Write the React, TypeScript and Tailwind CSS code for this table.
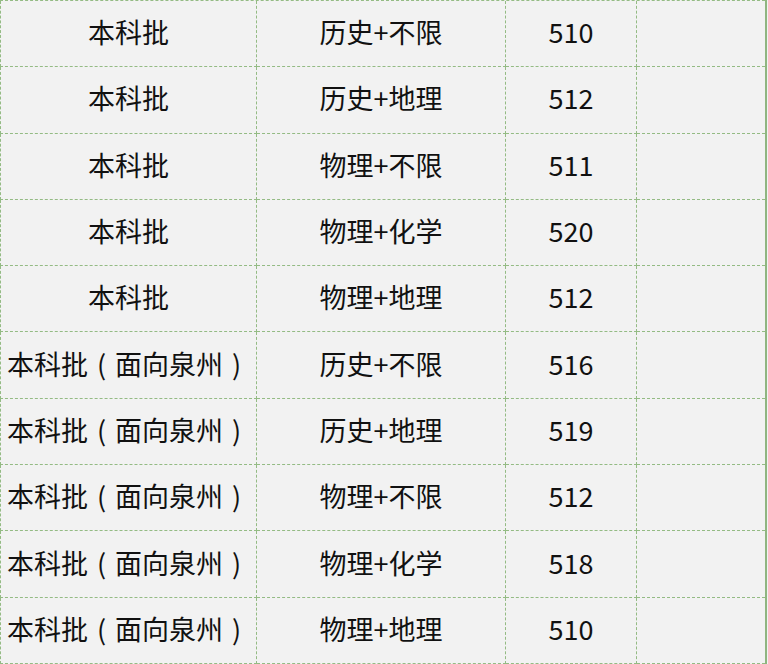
const rows: [string, string, string][] = [
  ["本科批", "历史+不限", "510"],
  ["本科批", "历史+地理", "512"],
  ["本科批", "物理+不限", "511"],
  ["本科批", "物理+化学", "520"],
  ["本科批", "物理+地理", "512"],
  ["本科批（面向泉州）", "历史+不限", "516"],
  ["本科批（面向泉州）", "历史+地理", "519"],
  ["本科批（面向泉州）", "物理+不限", "512"],
  ["本科批（面向泉州）", "物理+化学", "518"],
  ["本科批（面向泉州）", "物理+地理", "510"],
];

const cell =
  "flex h-[66.3px] items-center justify-center pb-[4px] border-b border-r border-dashed border-[#94bb84] whitespace-nowrap";

// full-width parens drawn centred in their em box
const Pici = ({ text }: { text: string }) => {
  const m = text.match(/^(.*)（(.*)）$/);
  if (!m) return <>{text}</>;
  return (
    <>
      {m[1]}
      <span className="inline-block w-[1em] text-center">(</span>
      {m[2]}
      <span className="inline-block w-[1em] text-center">)</span>
    </>
  );
};

const App = () => {
  return (
    <div
      className="h-[664px] w-[768px] overflow-hidden bg-[#f2f2f2] text-[27px] leading-none text-[#111]"
      style={{ fontFamily: '"Microsoft YaHei", "Noto Sans CJK SC", sans-serif' }}
    >
      <div className="w-[767px] border-r-2 border-[#8fb580]">
        <div className="grid grid-cols-[257px_249px_131px_128px] border-t border-dashed border-[#94bb84]">
          {rows.map(([pici, kemu, fen], i) => (
            <div key={i} className="contents">
              <div className={`${cell} border-l`}>
                <Pici text={pici} />
              </div>
              <div className={cell}>{kemu}</div>
              <div className={cell}>{fen}</div>
              <div className="h-[66.3px] border-b border-dashed border-[#94bb84]" />
            </div>
          ))}
        </div>
      </div>
    </div>
  );
};

export default App;
